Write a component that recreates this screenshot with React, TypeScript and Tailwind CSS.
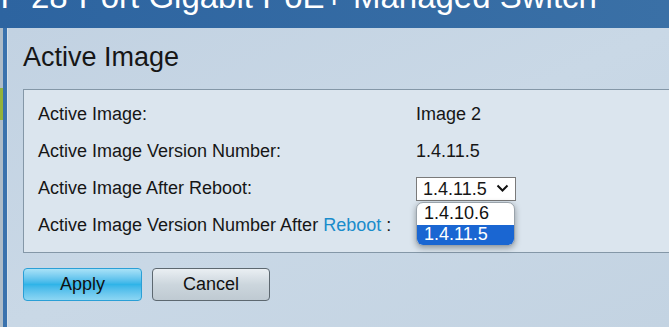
import { useState } from "react";

const font = { fontFamily: '"Liberation Sans", Arial, sans-serif' };

function Chevron() {
  return (
    <svg width="13" height="9" viewBox="0 0 13 9" className="shrink-0">
      <path d="M1.5 1.5 L6.5 6.5 L11.5 1.5" fill="none" stroke="#111" strokeWidth="2" />
    </svg>
  );
}

export default function App() {
  const [version, setVersion] = useState("1.4.11.5");
  const options = ["1.4.10.6", "1.4.11.5"];

  return (
    <div
      className="w-[669px] h-[327px] overflow-hidden flex flex-col bg-[#c4d4e3] text-[#161616]"
      style={font}
    >
      <div className="h-[28px] shrink-0 bg-gradient-to-r from-[#2d64a0] to-[#3a70a6] overflow-hidden">
        <div className="ml-[-150px] mt-[-20px] text-[33px] leading-[33px] text-white whitespace-nowrap">
          SG350-28P 28-Port Gigabit PoE+ Managed Switch
        </div>
      </div>

      <div className="flex flex-1 min-h-0">
        <div className="w-[3px] flex flex-col">
          <div className="h-[60px] bg-[#aebcc8]" />
          <div className="h-[32px] bg-[#93b23a]" />
          <div className="flex-1 bg-[#aebcc8]" />
        </div>
        <div className="w-[4px] bg-[#3a72ad]" />
        <div className="w-[1px] bg-[#d6e1ea]" />

        <div className="flex-1 min-w-0 bg-gradient-to-br from-[#c2d2e2] via-[#c9d8e6] to-[#c3d3e2] pl-[15px] pt-[13px]">
          <h1 className="text-[27px] leading-[32px] font-normal">Active Image</h1>

          <div className="mt-[16px] w-[680px] h-[164px] border border-[#8497a7] bg-[#dbe5ee] pl-[14px] pt-[6px] text-[18px]">
            <div className="grid grid-cols-[378px_1fr] auto-rows-[37px] items-center">
              <div>Active Image:</div>
              <div>Image 2</div>

              <div>Active Image Version Number:</div>
              <div>1.4.11.5</div>

              <div>Active Image After Reboot:</div>
              <div className="relative">
                <div className="w-[100px] h-[24px] border border-[#7a7a7a] bg-white flex items-center justify-between pl-[6px] pr-[6px] leading-none">
                  <span>{version}</span>
                  <Chevron />
                </div>
                <div className="absolute left-0 top-[25px] w-[99px] rounded-[7px] border border-[#9aa3ab] bg-white overflow-hidden shadow-[0_2px_6px_rgba(0,0,0,0.35)] z-10">
                  {options.map((o) => (
                    <div
                      key={o}
                      onClick={() => setVersion(o)}
                      className={
                        o === version
                          ? "h-[20px] pl-[7px] flex items-center bg-[#1a66d2] text-white"
                          : "h-[22px] pl-[7px] flex items-center text-[#111]"
                      }
                    >
                      {o}
                    </div>
                  ))}
                </div>
              </div>

              <div>
                Active Image Version Number After{" "}
                <span className="text-[#1a8ccb]">Reboot</span> :
              </div>
              <div />
            </div>
          </div>

          <div className="mt-[15px] flex gap-[10px] text-[18px]">
            <button className="w-[119px] h-[33px] rounded-[4px] border border-[#2a9fd6] bg-gradient-to-b from-[#a8e2f7] via-[#2fb4e8] to-[#8cd6f3] text-[#111]">
              Apply
            </button>
            <button className="w-[118px] h-[33px] rounded-[4px] border border-[#5d6870] bg-gradient-to-b from-[#eaeff3] via-[#ccd6dd] to-[#bfcad2] text-[#111]">
              Cancel
            </button>
          </div>
        </div>
      </div>
    </div>
  );
}
